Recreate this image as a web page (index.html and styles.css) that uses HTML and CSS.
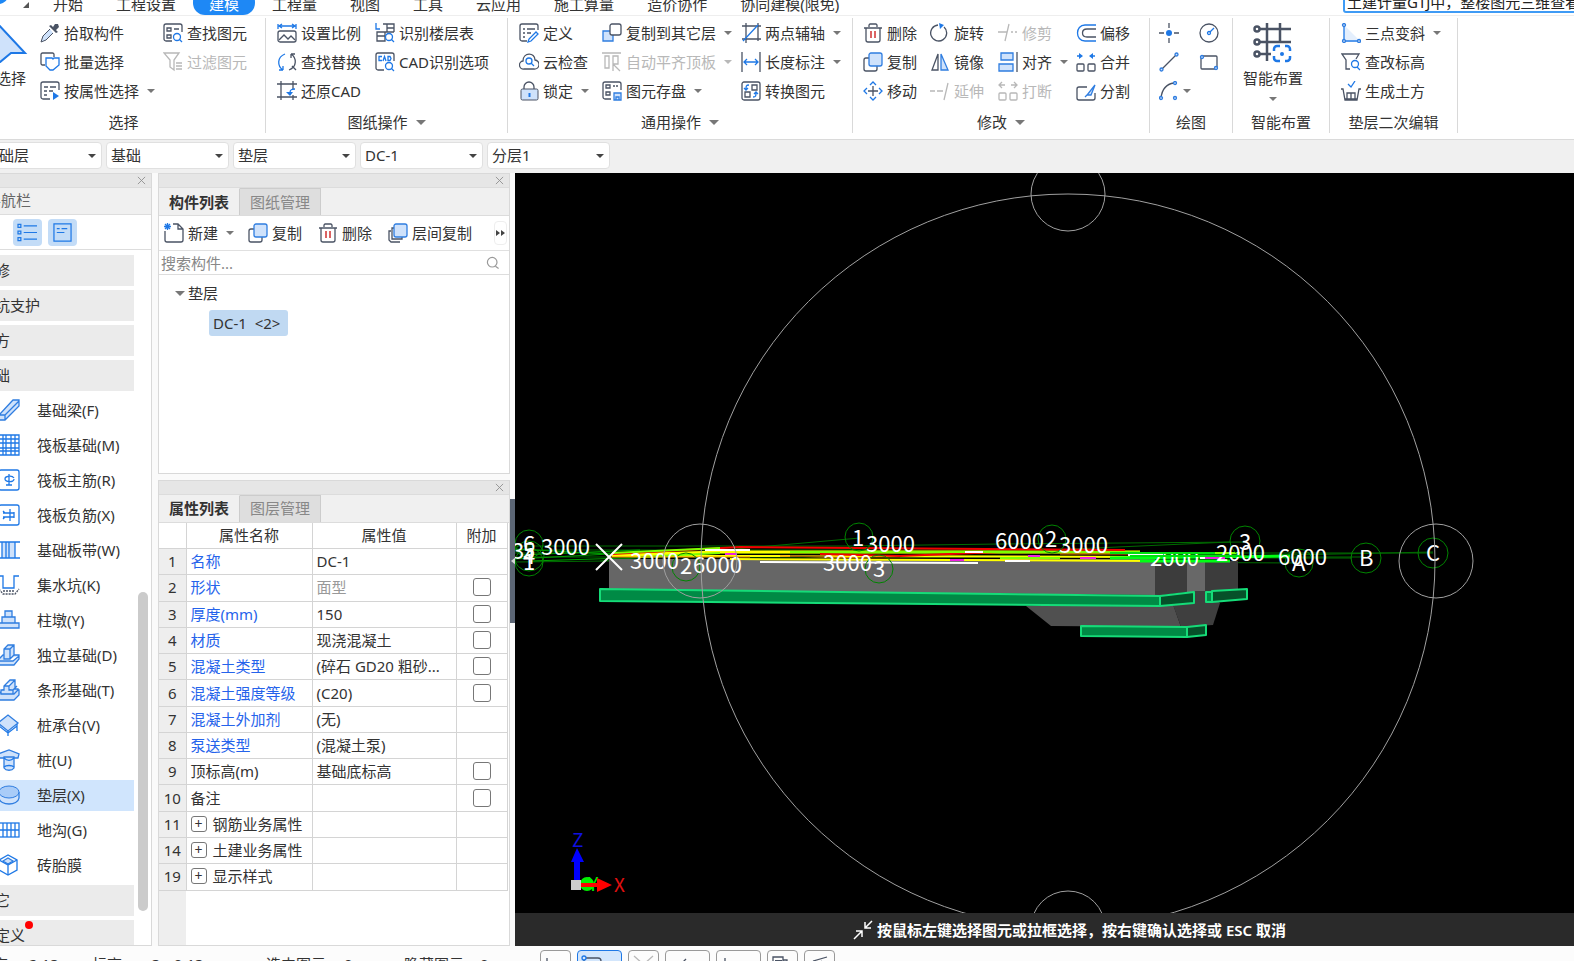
FILE: index.html
```html
<!DOCTYPE html>
<html lang="zh-CN">
<head>
<meta charset="utf-8">
<title>土建计量 - 建模</title>
<link rel="stylesheet" href="styles.css">
</head>
<body>
<svg class="defs" aria-hidden="true">
  <symbol id="i-pick" viewBox="0 0 20 20"><path d="M11 2l7 7-2 1-7-7zM13 4l2-3 3 0 1 3-3 3z" fill="#4a5364"/><path d="M10 6L3 13 1 19l5-2 7-7" fill="#cfe2fb" stroke="#4a5364"/></symbol>
  <symbol id="i-batch" viewBox="0 0 20 20"><path d="M5 13H2.500a1.500 1.500 0 0 1-1.500-1.500V2.500A1.500 1.500 0 0 1 2.500 1h10A1.500 1.500 0 0 1 14 2.500V5" class="g"/><path d="M6 6l6 0 1 1 1-1h5v7l-6 5h-3l-4-4z" class="b"/></symbol>
  <symbol id="i-prop" viewBox="0 0 20 20"><path d="M10 18H3a2 2 0 0 1-2-2V3a2 2 0 0 1 2-2h14a2 2 0 0 1 2 2v6M4 6h4M10 6h6M4 10h3M9 10h4M4 14h3" class="g"/><path d="M13 11l6 4-6 4z" fill="#1e78e6"/></symbol>
  <symbol id="i-find" viewBox="0 0 20 20"><path d="M9 18H3a2 2 0 0 1-2-2V3a2 2 0 0 1 2-2h14a2 2 0 0 1 2 2v6M4 5h4v3H4zM4 12h4v3H4zM11 6h5" class="g"/><circle cx="14" cy="14" r="3.500" class="b"/><path d="M16 16l3 3" class="b"/></symbol>
  <symbol id="i-filter" viewBox="0 0 20 20"><path d="M1 1h15l-5 7v10l-4-3V8zM13 11h6M13 14h6M13 17h6" class="d"/></symbol>
  <symbol id="i-scale" viewBox="0 0 20 20"><path d="M1 1v5M19 1v5M2 3h16M5 1L2 3l3 2M15 1l3 2-3 2" class="b"/><rect x="1" y="8" width="18" height="11" rx="2" class="g"/><path d="M2 17l5-5 4 4 3-3 4 4" class="g"/></symbol>
  <symbol id="i-replace" viewBox="0 0 20 20"><path d="M8 2C0 5 0 14 6 18M6 18H2M6 18v-4" class="b"/><path d="M12 18c8-3 8-12 2-16M14 2h4M14 2v4M15 14l4 4" class="g"/></symbol>
  <symbol id="i-restore" viewBox="0 0 20 20"><path d="M4 0v19M0 3h20M16 0v8M0 16h20M16 14v5" class="g"/><path d="M18 8c-4 0-5 1-5 4" class="b"/><path d="M9 11h7l-3 4z" fill="#1e78e6"/></symbol>
  <symbol id="i-floor" viewBox="0 0 20 20"><path d="M1 0v6h4" class="b"/><path d="M8 1h11v8M12 1v8H2v9h8V9M2 13h8M12 9h7M12 5h7" class="g"/><circle cx="14" cy="14" r="3.500" class="b"/><path d="M16 16l3 3" class="b"/></symbol>
  <symbol id="i-cad" viewBox="0 0 20 20"><path d="M9 18H3a2 2 0 0 1-2-2V3a2 2 0 0 1 2-2h14a2 2 0 0 1 2 2v6" class="g"/><path d="M7 4.500H4v4h3M8 9l1.500-4.500L11 9M13 4.500v4h2l1-2-1-2z" class="b"/><circle cx="14" cy="14" r="3.500" class="b"/><path d="M16 16l3 3" class="b"/></symbol>
  <symbol id="i-define" viewBox="0 0 20 20"><path d="M8 18H3a2 2 0 0 1-2-2V3a2 2 0 0 1 2-2h14a2 2 0 0 1 2 2v4M4 6h2M8 6h8M4 10h2M8 10h4M4 14h2" class="g"/><path d="M17 9l2 2-7 7-3 1 1-3z" class="b"/></symbol>
  <symbol id="i-cloud" viewBox="0 0 20 20"><path d="M5 17a4 4 0 0 1-1-8C4 0 16 0 16 8a4.500 4.500 0 0 1-1 9z" class="g"/><circle cx="10" cy="9" r="3" class="b"/><path d="M12 11l3 3" class="b"/></symbol>
  <symbol id="i-lock" viewBox="0 0 20 20"><path d="M5 9V6a5 5 0 0 1 10 0v3" class="g"/><rect x="2" y="8" width="17" height="11" rx="1.500" fill="#cfe2fb" stroke="#4a5364"/><path d="M10.500 12v4" stroke="#1e78e6" stroke-width="2"/></symbol>
  <symbol id="i-copyto" viewBox="0 0 20 20"><path d="M1 8h10v10H1z" class="f"/><rect x="8" y="1" width="11" height="11" rx="2" fill="#fff" stroke="#4a5364" stroke-width="1.300"/></symbol>
  <symbol id="i-top" viewBox="0 0 20 20"><path d="M0 1h19M3 4h4v12H3zM11 4h5v8h-5zM11 19v-7l7 7" class="d"/></symbol>
  <symbol id="i-save" viewBox="0 0 20 20"><path d="M9 18H3a2 2 0 0 1-2-2V3a2 2 0 0 1 2-2h14a2 2 0 0 1 2 2v6M4 4h4v3H4zM4 11h4v3H4zM11 5h2M14 5h2" class="g"/><path d="M12 12h7v7h-7zM14 19v-3h3v3" class="f"/></symbol>
  <symbol id="i-axis" viewBox="0 0 20 20"><path d="M5 0v20M17 0v18M1 3h19M1 16h19" class="g"/><path d="M2 18L17 2" class="b" stroke-width="2"/></symbol>
  <symbol id="i-length" viewBox="0 0 20 20"><path d="M1 0v20M19 0v20" class="g"/><path d="M3 10h14M6 7l-3 3 3 3M14 7l3 3-3 3" class="b"/></symbol>
  <symbol id="i-convert" viewBox="0 0 20 20"><rect x="1" y="1" width="18" height="18" rx="2" class="g"/><path d="M11 4h5v5h-5zM4 11h5v5H4z" class="g"/><path d="M8 4c-3 0-3 1-3 5M3 7l2 2 2-2M12 16c3 0 3-1 3-5M13 13l2-2 2 2" class="b"/></symbol>
  <symbol id="i-del" viewBox="0 0 20 20"><path d="M1 5h18M3 5v12a2 2 0 0 0 2 2h10a2 2 0 0 0 2-2V5M6 4V2l1-1h6l1 1v2" class="g"/><path d="M8 8v7M12 8v7" stroke="#d03030" stroke-width="1.500"/></symbol>
  <symbol id="i-rotate" viewBox="0 0 20 20"><path d="M14 4a8 8 0 1 1-6-2" class="g"/><path d="M9 0l5 2-4 4z" fill="#1e78e6"/></symbol>
  <symbol id="i-trim" viewBox="0 0 20 20"><path d="M0 9h9M13 9h2M17 9h2M11 1L7 18" class="d"/></symbol>
  <symbol id="i-offset" viewBox="0 0 20 20"><path d="M20 2H9C-1 2-1 18 9 18h11" class="b"/><path d="M20 6h-9c-6 0-6 8 0 8h9" class="g"/></symbol>
  <symbol id="i-copy" viewBox="0 0 20 20"><path d="M6 6H3a2 2 0 0 0-2 2v9a2 2 0 0 0 2 2h9a2 2 0 0 0 2-2v-3" class="g"/><rect x="6" y="1" width="13" height="13" rx="2" class="f"/></symbol>
  <symbol id="i-mirror" viewBox="0 0 20 20"><path d="M8 2v16H2z" class="g"/><path d="M11 2v16h7z" class="f"/></symbol>
  <symbol id="i-align" viewBox="0 0 20 20"><path d="M3 1h12v7H3zM1 12h14v7H1z" class="f"/><path d="M19 0v20" class="g"/></symbol>
  <symbol id="i-merge" viewBox="0 0 20 20"><path d="M1 4h4M19 4h-4" class="b"/><path d="M3 1l4 3-4 3zM17 1l-4 3 4 3z" fill="#1e78e6"/><rect x="1" y="12" width="7" height="7" rx="1" class="g"/><rect x="12" y="12" width="7" height="7" rx="1" class="g"/></symbol>
  <symbol id="i-move" viewBox="0 0 20 20"><path d="M10 5v10M5 10h10" class="g"/><path d="M7 4l3-3 3 3M7 16l3 3 3-3M4 7l-3 3 3 3M16 7l3 3-3 3" class="b"/></symbol>
  <symbol id="i-extend" viewBox="0 0 20 20"><path d="M0 10h5M7 10h6M18 2l-4 17" class="d"/></symbol>
  <symbol id="i-break" viewBox="0 0 20 20"><path d="M4 1L1 4l3 3M16 1l3 3-3 3M1 4h6M13 4h6" class="d"/><rect x="1" y="12" width="7" height="7" rx="1" class="d"/><rect x="12" y="12" width="7" height="7" rx="1" class="d"/></symbol>
  <symbol id="i-split" viewBox="0 0 20 20"><path d="M11 6H3a2 2 0 0 0-2 2v9a2 2 0 0 0 2 2h14a2 2 0 0 0 2-2v-5" class="g"/><path d="M19 4l-8 10h4zM11 14l-2 2" class="f"/></symbol>
  <symbol id="i-point" viewBox="0 0 20 20"><path d="M10 0v5M10 15v5M0 10h5M15 10h5" class="g"/><circle cx="10" cy="10" r="3" fill="#1e78e6"/></symbol>
  <symbol id="i-circle" viewBox="0 0 20 20"><circle cx="10" cy="10" r="9" class="g"/><circle cx="10" cy="10" r="1.500" class="b"/><path d="M11 9l4-4" class="b"/></symbol>
  <symbol id="i-line" viewBox="0 0 20 20"><path d="M2 18L18 2" class="g"/><circle cx="2.500" cy="17.500" r="1.500" class="f"/><circle cx="17.500" cy="2.500" r="1.500" class="f"/></symbol>
  <symbol id="i-rect" viewBox="0 0 20 20"><rect x="2" y="4" width="16" height="13" rx="1" class="g"/><circle cx="3" cy="5" r="1.500" class="f"/><circle cx="17" cy="16" r="1.500" class="f"/></symbol>
  <symbol id="i-arc" viewBox="0 0 20 20"><path d="M2 17C3 8 8 3 15 2" class="g"/><circle cx="2" cy="17" r="1.500" class="f"/><circle cx="16" cy="2" r="1.500" class="f"/><circle cx="16" cy="17" r="1.500" class="f"/></symbol>
  <symbol id="i-slope" viewBox="0 0 20 20"><path d="M3 2v15h15z" fill="#e4effd"/><path d="M3 2v16h16" class="b"/><circle cx="3" cy="2" r="1.500" class="f"/><circle cx="3" cy="18" r="1.500" class="f"/><circle cx="18" cy="18" r="1.500" class="f"/></symbol>
  <symbol id="i-level" viewBox="0 0 20 20"><path d="M9 17H5V8L1 2h17l-3 5" class="g"/><circle cx="14" cy="12" r="3.500" class="b"/><path d="M16 15l3 3" class="b"/></symbol>
  <symbol id="i-earth" viewBox="0 0 20 20"><path d="M0 8h2l2 11h12l2-11h2M6 18v-6h8v6M10 12v6M4 18h12" class="g"/><path d="M7 3l3 3 4-6" class="b"/></symbol>
  <symbol id="i-new" viewBox="0 0 20 20"><path d="M1 8v9a2 2 0 0 0 2 2h14a2 2 0 0 0 2-2V6l-5-5H9M14 1v5h5" class="g"/><path d="M1 1l5 5M6 1L1 6M3.500 0v7M0 3.500h7" class="b"/></symbol>
  <symbol id="i-layers" viewBox="0 0 20 20"><path d="M3 8H1v9l2 2h9M6 5H4v11h10v-2" class="g"/><rect x="6" y="1" width="13" height="13" rx="2" class="f"/></symbol>
  <symbol id="i-search" viewBox="0 0 20 20"><circle cx="9" cy="9" r="6" fill="none" stroke="#999" stroke-width="1.500"/><path d="M13 14l4 3" stroke="#999" stroke-width="1.500"/></symbol>
  <symbol id="i-x" viewBox="0 0 10 10"><path d="M1 1l8 8M9 1L1 9" stroke="#909090" fill="none"/></symbol>
  <symbol id="n-beam" viewBox="0 0 22 22"><path d="M1 16L15 1h6v6L7 21H1zM1 16h6v5M7 16L21 2" class="f"/></symbol>
  <symbol id="n-raft" viewBox="0 0 22 22"><path d="M1 1h20v20H1zM1 5h20M1 9h20M1 14h20M1 17h20M5 1v20M8 1v20M13 1v20M17 1v20" class="b"/></symbol>
  <symbol id="n-main" viewBox="0 0 22 22"><rect x="1" y="1" width="20" height="20" rx="2" class="b"/><path d="M11 5v11M16 9c-2-3-9-2-9 1s9 4 9 0M8 16h6" class="b"/></symbol>
  <symbol id="n-neg" viewBox="0 0 22 22"><rect x="1" y="1" width="20" height="20" rx="2" class="b"/><path d="M5 9h11M5 13h11M12 5v12M5 7l2 2M5 15l2-2M16 8v6" class="b"/></symbol>
  <symbol id="n-band" viewBox="0 0 22 22"><path d="M4 3h13v16H4z" fill="#cfe2fb"/><path d="M0 3h22M0 19h22M4 3v16M17 3v16M11 3v16M8 3v16" class="b"/></symbol>
  <symbol id="n-pit" viewBox="0 0 22 22"><path d="M0 2h5v12h11V2h5" class="b"/><path d="M1 15l4 5h12l4-5M5 17h12" class="g" stroke-dasharray="2 1"/></symbol>
  <symbol id="n-pier" viewBox="0 0 22 22"><path d="M7 2h7v6H7zM4 8h13v6H4zM0 14h21v5H0z" class="f"/></symbol>
  <symbol id="n-iso" viewBox="0 0 22 22"><path d="M0 16l5-5h16v4l-5 6H0zM0 17h15l6-5" class="f"/><path d="M6 15V5l4-4h6v10l-4 4zM6 5h6v10M12 5l4-4" class="f"/></symbol>
  <symbol id="n-strip" viewBox="0 0 22 22"><path d="M0 16l5-5h16v5l-5 5H0z" class="f"/><path d="M3 15v-4h3V7l6-6h5v9h3v1l-4 4zM6 7h5l6-6M11 7v4h4v4M15 11l4-4" class="f"/></symbol>
  <symbol id="n-cap" viewBox="0 0 22 22"><path d="M0 9l10-8 10 8-10 8z" class="f"/><path d="M1 10v7M19 10v7M10 17v5M1 12l9 7 9-7" class="b"/></symbol>
  <symbol id="n-pile" viewBox="0 0 22 22"><path d="M0 5l11-4 10 4-1 4H1z" class="f"/><path d="M6 8h10v11c-2 3-8 3-10 0z" class="f"/><path d="M6 9c3 3 7 3 10 0M6 18c2-2 8-2 10 0" class="b"/></symbol>
  <symbol id="n-pad" viewBox="0 0 22 22"><path d="M1 8v6c1 8 19 8 20 0V8" class="f"/><ellipse cx="11" cy="8" rx="10" ry="6" fill="#a9ccf8" stroke="#2f7de0"/></symbol>
  <symbol id="n-ditch" viewBox="0 0 22 22"><rect x="0" y="4" width="21" height="14" class="b"/><path d="M5 4v14M9 4v14M13 4v14M17 4v14M0 11h21" class="b"/></symbol>
  <symbol id="n-brick" viewBox="0 0 22 22"><path d="M1 6l9-5 9 5v10l-9 5-9-5z" class="b"/><path d="M5 7l5-3 5 3-5 3z" class="f"/><path d="M1 6l9 5 9-5M10 11v10" class="b"/></symbol>
</svg>

<div class="app">
  <nav class="menu" aria-label="主菜单">
    <span class="logo"></span><span class="corner"></span>
    <a href="#">开始</a><a href="#">工程设置</a><a href="#" class="on">建模</a><a href="#">工程量</a><a href="#">视图</a><a href="#">工具</a><a href="#">云应用</a><a href="#">施工算量</a><a href="#">造价协作</a><a href="#">协同建模(限免)</a>
    <input class="ask" type="text" aria-label="搜索" value="土建计量GTJ中，整楼图元三维查看">
  </nav>

  <header class="ribbon">
    <section class="group g1">
      <div class="tools">
        <button class="big"><svg viewBox="0 0 40 40"><path d="M6 0L34 30H20L8 40z" fill="#cfe2fb" stroke="#1e78e6" stroke-width="2"/></svg>选择</button>
        <button><svg><use href="#i-pick"/></svg>拾取构件</button>
        <button><svg><use href="#i-batch"/></svg>批量选择</button>
        <button><svg><use href="#i-prop"/></svg>按属性选择<i class="caret"></i></button>
        <button><svg><use href="#i-find"/></svg>查找图元</button>
        <button disabled><svg><use href="#i-filter"/></svg>过滤图元</button>
      </div>
      <div class="label">选择</div>
    </section>
    <section class="group g2">
      <div class="tools">
        <button><svg><use href="#i-scale"/></svg>设置比例</button>
        <button><svg><use href="#i-replace"/></svg>查找替换</button>
        <button><svg><use href="#i-restore"/></svg>还原CAD</button>
        <button><svg><use href="#i-floor"/></svg>识别楼层表</button>
        <button><svg><use href="#i-cad"/></svg>CAD识别选项</button>
      </div>
      <div class="label">图纸操作<i class="caret wide"></i></div>
    </section>
    <section class="group g3">
      <div class="tools">
        <button><svg><use href="#i-define"/></svg>定义</button>
        <button><svg><use href="#i-cloud"/></svg>云检查</button>
        <button><svg><use href="#i-lock"/></svg>锁定<i class="caret"></i></button>
        <button><svg><use href="#i-copyto"/></svg>复制到其它层<i class="caret"></i></button>
        <button disabled><svg><use href="#i-top"/></svg>自动平齐顶板<i class="caret"></i></button>
        <button><svg><use href="#i-save"/></svg>图元存盘<i class="caret"></i></button>
        <button><svg><use href="#i-axis"/></svg>两点辅轴<i class="caret"></i></button>
        <button><svg><use href="#i-length"/></svg>长度标注<i class="caret"></i></button>
        <button><svg><use href="#i-convert"/></svg>转换图元</button>
      </div>
      <div class="label">通用操作<i class="caret wide"></i></div>
    </section>
    <section class="group g4">
      <div class="tools">
        <button><svg><use href="#i-del"/></svg>删除</button>
        <button><svg><use href="#i-copy"/></svg>复制</button>
        <button><svg><use href="#i-move"/></svg>移动</button>
        <button><svg><use href="#i-rotate"/></svg>旋转</button>
        <button><svg><use href="#i-mirror"/></svg>镜像</button>
        <button disabled><svg><use href="#i-extend"/></svg>延伸</button>
        <button disabled><svg><use href="#i-trim"/></svg>修剪</button>
        <button><svg><use href="#i-align"/></svg>对齐<i class="caret"></i></button>
        <button disabled><svg><use href="#i-break"/></svg>打断</button>
        <button><svg><use href="#i-offset"/></svg>偏移</button>
        <button><svg><use href="#i-merge"/></svg>合并</button>
        <button><svg><use href="#i-split"/></svg>分割</button>
      </div>
      <div class="label">修改<i class="caret wide"></i></div>
    </section>
    <section class="group g5">
      <div class="tools">
        <button aria-label="点"><svg><use href="#i-point"/></svg></button>
        <button aria-label="直线"><svg><use href="#i-line"/></svg></button>
        <button aria-label="弧"><svg><use href="#i-arc"/></svg><i class="caret"></i></button>
        <button aria-label="圆"><svg><use href="#i-circle"/></svg></button>
        <button aria-label="矩形"><svg><use href="#i-rect"/></svg></button>
      </div>
      <div class="label">绘图</div>
    </section>
    <section class="group g6">
      <div class="tools">
        <button class="big"><svg viewBox="0 0 40 40"><g fill="none" stroke="#4a5364" stroke-width="2.500"><path d="M6 6h32M6 19h32M6 31h12M14 0v38M27 0v18"/><g fill="#fff"><circle cx="4" cy="6" r="2.500"/><circle cx="4" cy="19" r="2.500"/><circle cx="4" cy="31" r="2.500"/></g></g><path d="M27 23h-3a3 3 0 0 0-3 3v2M32 23h2a3 3 0 0 1 3 3v2M37 33v2a3 3 0 0 1-3 3h-2M27 38h-3a3 3 0 0 1-3-3v-2" fill="none" stroke="#1e78e6" stroke-width="2.500"/><circle cx="29" cy="31" r="2" fill="#1e78e6"/></svg>智能布置<i class="caret"></i></button>
      </div>
      <div class="label">智能布置</div>
    </section>
    <section class="group g7">
      <div class="tools">
        <button><svg><use href="#i-slope"/></svg>三点变斜<i class="caret"></i></button>
        <button><svg><use href="#i-level"/></svg>查改标高</button>
        <button><svg><use href="#i-earth"/></svg>生成土方</button>
      </div>
      <div class="label">垫层二次编辑</div>
    </section>
  </header>

  <div class="context">
    <label class="combo"><select aria-label="楼层"><option>基础层</option></select></label>
    <label class="combo"><select aria-label="构件大类"><option>基础</option></select></label>
    <label class="combo"><select aria-label="构件类型"><option>垫层</option></select></label>
    <label class="combo"><select aria-label="构件"><option>DC-1</option></select></label>
    <label class="combo"><select aria-label="分层"><option>分层1</option></select></label>
  </div>

  <main class="main">
    <aside class="panel nav">
      <div class="strip"><button aria-label="关闭"><svg><use href="#i-x"/></svg></button></div>
      <div class="nav-title">导航栏</div>
      <div class="nav-mode">
        <button aria-label="列表"><svg viewBox="0 0 20 20"><path d="M6 3h14M6 10h14M6 17h14M0 1.500h3v3H0zM0 8.500h3v3H0zM0 15.500h3v3H0z" class="b"/></svg></button>
        <button aria-label="分组"><svg viewBox="0 0 20 20"><path d="M1 1h18v18H1zM4 6h3M9 6h6M4 10h8" class="b"/></svg></button>
      </div>
      <div class="nav-body">
        <div class="nav-list">
          <button class="sec">装修</button>
          <button class="sec">基坑支护</button>
          <button class="sec">土方</button>
          <button class="sec">基础</button>
          <button><svg><use href="#n-beam"/></svg>基础梁(F)</button>
          <button><svg><use href="#n-raft"/></svg>筏板基础(M)</button>
          <button><svg><use href="#n-main"/></svg>筏板主筋(R)</button>
          <button><svg><use href="#n-neg"/></svg>筏板负筋(X)</button>
          <button><svg><use href="#n-band"/></svg>基础板带(W)</button>
          <button><svg><use href="#n-pit"/></svg>集水坑(K)</button>
          <button><svg><use href="#n-pier"/></svg>柱墩(Y)</button>
          <button><svg><use href="#n-iso"/></svg>独立基础(D)</button>
          <button><svg><use href="#n-strip"/></svg>条形基础(T)</button>
          <button><svg><use href="#n-cap"/></svg>桩承台(V)</button>
          <button><svg><use href="#n-pile"/></svg>桩(U)</button>
          <button class="cur"><svg><use href="#n-pad"/></svg>垫层(X)</button>
          <button><svg><use href="#n-ditch"/></svg>地沟(G)</button>
          <button><svg><use href="#n-brick"/></svg>砖胎膜</button>
          <button class="sec">其它</button>
          <button class="sec"><span class="dot">自定义</span></button>
        </div>
        <div class="track"><div class="thumb"></div></div>
      </div>
    </aside>

    <div class="docks">
      <section class="panel">
        <div class="strip"><button aria-label="关闭"><svg><use href="#i-x"/></svg></button></div>
        <div class="tabs"><button class="on">构件列表</button><button>图纸管理</button></div>
        <div class="bar">
          <button><svg><use href="#i-new"/></svg>新建<i class="caret"></i></button>
          <button><svg><use href="#i-copy"/></svg>复制</button>
          <button><svg><use href="#i-del"/></svg>删除</button>
          <button><svg><use href="#i-layers"/></svg>层间复制</button>
          <button class="more" aria-label="更多"><svg viewBox="0 0 10 6"><path d="M0 0l4 3-4 3zM5 0l4 3-4 3z" fill="#444"/></svg></button>
        </div>
        <label class="search"><input type="text" aria-label="搜索构件" placeholder="搜索构件..."><svg><use href="#i-search"/></svg></label>
        <div class="tree">
          <div class="node"><i class="caret wide"></i>垫层</div>
          <button class="leaf">DC-1&nbsp; &lt;2&gt;</button>
        </div>
      </section>
      <section class="panel props">
        <div class="strip"><button aria-label="关闭"><svg><use href="#i-x"/></svg></button></div>
        <div class="tabs"><button class="on">属性列表</button><button>图层管理</button></div>
        <div class="sheet">
          <table>
            <colgroup><col class="c1"><col class="c2"><col class="c3"><col class="c4"></colgroup>
            <thead><tr><td></td><th>属性名称</th><th>属性值</th><th>附加</th></tr></thead>
            <tbody>
              <tr><th>1</th><td class="k">名称</td><td>DC-1</td><td></td></tr>
              <tr><th>2</th><td class="k">形状</td><td class="mute">面型</td><td><input type="checkbox" aria-label="附加 形状"></td></tr>
              <tr><th>3</th><td class="k">厚度(mm)</td><td>150</td><td><input type="checkbox" aria-label="附加 厚度"></td></tr>
              <tr><th>4</th><td class="k">材质</td><td>现浇混凝土</td><td><input type="checkbox" aria-label="附加 材质"></td></tr>
              <tr><th>5</th><td class="k">混凝土类型</td><td>(碎石 GD20 粗砂...</td><td><input type="checkbox" aria-label="附加 混凝土类型"></td></tr>
              <tr><th>6</th><td class="k">混凝土强度等级</td><td>(C20)</td><td><input type="checkbox" aria-label="附加 混凝土强度等级"></td></tr>
              <tr><th>7</th><td class="k">混凝土外加剂</td><td>(无)</td><td></td></tr>
              <tr><th>8</th><td class="k">泵送类型</td><td>(混凝土泵)</td><td></td></tr>
              <tr><th>9</th><td>顶标高(m)</td><td>基础底标高</td><td><input type="checkbox" aria-label="附加 顶标高"></td></tr>
              <tr><th>10</th><td>备注</td><td></td><td><input type="checkbox" aria-label="附加 备注"></td></tr>
              <tr><th>11</th><td><button class="plus">+</button>钢筋业务属性</td><td></td><td></td></tr>
              <tr><th>14</th><td><button class="plus">+</button>土建业务属性</td><td></td><td></td></tr>
              <tr><th>19</th><td><button class="plus">+</button>显示样式</td><td></td><td></td></tr>
            </tbody>
          </table>
          <div class="gutter"></div>
        </div>
      </section>
    </div>

    <div class="split"><button aria-label="收起面板"><svg viewBox="0 0 5 8"><path d="M5 0v8L0 4z" fill="#d8d8d8"/></svg></button></div>

    <section class="view">
      <svg class="scene" viewBox="515 172 1059 774" preserveAspectRatio="xMinYMin slice" aria-label="三维视图">
        <g fill="none" stroke="#006c00">
          <path d="M515 545L850 545 1000 543 1245 541M515 549H1050L1230 541M515 552H1433M515 556H1366M515 561L700 559 1299 562M600 560L860 537M686 567L760 559M879 567L1060 560M1238 555L1433 551M1240 557H1352"/>
          <path d="M515 548L610 553M515 558L610 553M520 554L640 549M530 560L690 555" stroke="#00a000"/>
        </g>
        <path d="M609 558H1155V594L609 589z" fill="#666"/>
        <path d="M1155 560h32v31l-32 4zM1205 560h33v29l-33 3z" fill="#3c3c3c"/>
        <path d="M1187 560h18v31h-18z" fill="#686868"/>
        <path d="M1026 605L1051 625 1181 626 1173 603z" fill="#505050"/>
        <path d="M1173 604L1181 626 1213 624 1220 602 1205 590H1195z" fill="#3f3f3f"/>
        <g stroke="#15dc78" stroke-width="2" stroke-linejoin="round">
          <path d="M600 588L1160 595V605L600 600z" fill="#008a45"/>
          <path d="M1160 595L1194 591V602L1160 605z" fill="#065029"/>
          <path d="M1206 591h6v10h-6z" fill="#008a45"/>
          <path d="M1212 590L1247 588V598L1212 601z" fill="#065029"/>
          <path d="M1081 625L1187 626V636L1081 635z" fill="#008a45"/>
          <path d="M1187 626L1206 624V634L1187 636z" fill="#065029"/>
        </g>
        <g fill="none">
          <path d="M612 554L720 551H1155" stroke="#ff0" stroke-width="3"/>
          <path d="M612 555L800 555 1155 556M730 558L1155 560" stroke="#ff0" stroke-width="2"/>
          <path d="M612 553L740 546 1125 549M820 553L900 555 1000 551" stroke="#f00000" stroke-width="2"/>
          <path d="M612 552L720 547M640 556L720 552M790 551h350M1000 557h60M1130 552h110" stroke="#7dff00" stroke-width="2"/>
          <path d="M1110 557L1290 555M1140 560h90M1150 555h90" stroke="#00ff14" stroke-width="3"/>
          <path d="M610 556H750M780 555L870 557M1060 553h80" stroke="#f08000"/>
          <path d="M705 549h45M760 561L978 562M965 551h18M1128 554h35M1005 560h25M1200 557h12" stroke="#fff" stroke-width="2"/>
          <path d="M725 553h12M950 559h14M1028 555h12M1080 557h16M1205 557h20" stroke="#f020e0" stroke-width="2"/>
          <path d="M790 555h36M870 557h30" stroke="#502000"/>
        </g>
        <g fill="none" stroke="#008400">
          <circle cx="529" cy="543" r="14"/><circle cx="529" cy="555" r="15"/><circle cx="529" cy="561" r="14"/>
          <circle cx="686" cy="566" r="14"/><circle cx="859" cy="536" r="14"/><circle cx="879" cy="568" r="14"/>
          <circle cx="1052" cy="538" r="14"/><circle cx="1245" cy="540" r="15"/><circle cx="1299" cy="562" r="14"/>
          <circle cx="1366" cy="557" r="15"/><circle cx="1433" cy="552" r="15"/>
        </g>
        <g class="dims">
          <text x="512" y="558">3</text><text x="523" y="551">6</text><text x="523" y="558">5</text><text x="523" y="563">4</text><text x="523" y="569">1</text>
          <text x="541" y="554">3000</text><text x="630" y="568">3000</text><text x="680" y="573">2</text><text x="693" y="572">6000</text>
          <text x="852" y="545">1</text><text x="866" y="551">3000</text><text x="823" y="570">3000</text><text x="873" y="576">3</text>
          <text x="995" y="548">6000</text><text x="1045" y="546">2</text><text x="1059" y="552">3000</text>
          <text x="1150" y="565">2000</text><text x="1216" y="560">2000</text><text x="1239" y="549">3</text>
          <text x="1278" y="564">6000</text><text x="1292" y="570">A</text><text x="1359" y="565">B</text><text x="1426" y="560">C</text>
        </g>
        <path d="M1140 548h62v4h-62z" fill="#000"/>
        <path d="M1110 552h105M1130 555h110" stroke="#00e010" stroke-width="2"/>
        <path d="M596 543l26 26M622 543l-26 26" stroke="#fff" stroke-width="2"/>
        <g fill="none" stroke="#a0a0a0">
          <circle cx="1068" cy="560" r="367"/><circle cx="1068" cy="193" r="37"/><circle cx="1068" cy="927" r="37"/>
          <circle cx="700" cy="560" r="37"/><circle cx="1436" cy="560" r="37"/>
        </g>
        <path d="M574 880V861h-3l6-14 7 14h-4v19z" fill="#00f"/>
        <text x="572" y="846" class="ax" fill="#1010e0">Z</text>
        <circle cx="587" cy="883" r="7" fill="#00f000"/><text x="588" y="890" class="ax" fill="#00f000">Y</text>
        <path d="M580 882h17v-5l15 7-15 7v-5h-17z" fill="#f00"/>
        <text x="614" y="891" class="ax" fill="#e01010">X</text>
        <path d="M571 879h10v10h-10z" fill="#ccc"/>
      </svg>
      <div class="hint"><svg viewBox="0 0 20 20"><path d="M19 1l-7 7M12 2v6h6M1 19l8-8M3 11h6v6" fill="none" stroke="#fff" stroke-width="1.500"/></svg>按鼠标左键选择图元或拉框选择，按右键确认选择或 ESC 取消</div>
    </section>
  </main>

  <footer class="status">
    <div class="facts"><span>层高:</span><span>2.13</span><span>标高:</span><span>-3~-0.13</span><span>选中图元:</span><span>0</span><span>隐藏图元:</span><span>0</span></div>
    <div class="snaps">
      <button aria-label="正交"><svg><path d="M6 7v14h14" class="g"/></svg></button>
      <button class="wide on" aria-label="捕捉"><svg><path d="M8 7h12a3 3 0 0 1 3 3v10M6 9v10" class="g"/><circle cx="6" cy="7" r="2" class="b"/></svg></button>
      <button aria-label="交点"><svg><path d="M5 5l18 16M24 5L6 21" class="d"/></svg></button>
      <button class="wide" aria-label="垂点"><svg><path d="M20 8L8 20" class="g"/></svg></button>
      <button class="wide" aria-label="中点"><svg><path d="M8 7v14h14" class="g"/></svg></button>
      <button aria-label="顶点"><svg><path d="M5 6h10v12H5zM15 9h4v9" class="g"/><path d="M7 9h7v6H7z" fill="#4a5364"/></svg></button>
      <button aria-label="坐标"><svg><path d="M8 10L22 6M9 18l8-8" class="g"/></svg></button>
    </div>
  </footer>
</div>
</body>
</html>
```
FILE: styles.css
```css
* { box-sizing: border-box; }
body { margin: 0; background: #fff; color: #333; font: 15px/20px "Noto Sans", "Noto Sans CJK SC", sans-serif; }
button, input, select { font: inherit; color: inherit; border: 0; background: none; padding: 0; margin: 0; }
button { display: flex; align-items: center; white-space: nowrap; }
.defs { position: absolute; width: 0; height: 0; }
.g { fill: none; stroke: #4a5364; stroke-width: 1.3; }
.b { fill: none; stroke: #1e78e6; stroke-width: 1.3; }
.f { fill: #cfe2fb; stroke: #2f7de0; stroke-width: 1.3; }
.d { fill: none; stroke: #b8b8b8; stroke-width: 1.3; }
.app { display: flex; flex-direction: column; height: 100vh; overflow: hidden; }
.caret { flex: none; border: 4px solid transparent; border-top-color: #777; border-bottom: 0; margin-left: 8px; }
.caret.wide { border-width: 5px; border-bottom: 0; margin-left: 8px; }

.menu { display: flex; align-items: flex-end; gap: 1px; flex: none; height: 16px; overflow: hidden; border-bottom: 1px solid #eee; }
.menu a { flex: none; height: 25px; padding: 0 16px; line-height: 28px; color: #333; text-decoration: none; border-radius: 12px; }
.menu a.on { background: #1e88f5; color: #fff; }
.logo { width: 9px; height: 16px; margin-left: -1px; background: #1e88f5; border-radius: 0 0 9px 0; align-self: flex-start; margin-top: -12px; }
.corner { border-left: 6px solid transparent; border-bottom: 6px solid #555; margin: 0 7px 7px 14px; }
.ask { width: 240px; height: 26px; margin: 0 -9px 2px auto; padding: 2px 2px 0; border: 2px solid #3f9bf5; border-radius: 3px; color: #222; }

.ribbon { display: flex; flex: none; padding: 2px 0 6px; border-bottom: 1px solid #dadada; overflow: hidden; }
.group { flex: none; padding-bottom: 1px; border-right: 1px solid #d9d9d9; }
.tools { display: grid; grid-auto-flow: column; grid-template-rows: repeat(3, 29px); padding-left: 11px; }
.tools button { gap: 4px; }
.tools svg { flex: none; width: 20px; height: 20px; }
.tools .caret { margin-left: 4px; }
.tools button:disabled { color: #b8b8b8; }
.tools button:disabled .caret { border-top-color: #b8b8b8; }
.tools .big { grid-row: 1 / 4; flex-direction: column; gap: 5px; padding-top: 5px; }
.tools .big svg { width: 40px; height: 40px; }
.tools .big .caret { margin: 4px 0 0; }
.label { display: flex; justify-content: center; align-items: center; padding-top: 7px; }
.g1 { margin-left: -18px; }
.g1 .tools { grid-template-columns: 58px 123px 102px; padding-left: 0; }
.g2 .tools { grid-template-columns: 98px 132px; }
.g3 .tools { grid-template-columns: 83px 139px 111px; }
.g4 .tools { grid-template-columns: 67px 68px 78px 73px; padding-left: 10px; }
.g5 .tools { grid-template-columns: 40px 33px; padding-left: 9px; }
.g5 .caret { margin-left: 0; }
.g6 .tools { grid-template-columns: 80px; padding: 0 16px 0 0; justify-content: center; }
.g7 .tools { grid-template-columns: 116px; }

.context { display: flex; flex: none; gap: 4px; height: 33px; padding: 2px 0 4px; background: #f0f0f0; margin-left: -21px; }
.combo { position: relative; width: 123px; }
.combo select { width: 100%; height: 27px; padding: 0 4px 2px; appearance: none; background: #fff; border: 1px solid #e0e0e0; border-radius: 4px; }
.combo::after { content: ""; position: absolute; right: 6px; top: 12px; border: 4px solid transparent; border-top-color: #444; border-bottom: 0; pointer-events: none; }

.main { display: grid; grid-template-columns: 152px 358px 5px minmax(0, 1fr); flex: 1; min-height: 0; background: #fafafa; }
.panel { display: flex; flex-direction: column; min-height: 0; border: 1px solid #d9d9d9; background: #fff; overflow: hidden; }
.strip { display: flex; flex: none; justify-content: flex-end; height: 14px; padding-right: 5px; background: #e6e6e6; border-bottom: 1px solid #dcdcdc; }
.strip svg { width: 9px; height: 9px; }
.nav { border-left: 0; }
.nav-title { flex: none; height: 27px; line-height: 25px; margin-left: -14px; background: #f0f0f0; color: #666; border-bottom: 1px solid #ddd; }
.nav-mode { display: flex; flex: none; gap: 6px; height: 35px; padding: 4px 0 3px 13px; border-bottom: 1px solid #ddd; }
.nav-mode button { justify-content: center; width: 29px; height: 27px; border-radius: 4px; background: #c3dcf7; }
.nav-mode svg { width: 19px; height: 19px; overflow: visible; }
.nav-body { display: flex; flex: 1; min-height: 0; padding-right: 3px; }
.nav-list { display: flex; flex-direction: column; flex: none; gap: 4px; width: 162px; margin-left: -28px; padding-top: 5px; overflow: hidden; }
.nav-list button { flex: none; gap: 17px; height: 31px; padding: 0 0 2px 26px; }
.nav-list .sec { padding-left: 8px; background: #ebebeb; }
.nav-list .cur { background: #d0e5fd; }
.nav-list svg { flex: none; width: 22px; height: 22px; }
.dot { position: relative; }
.dot::after { content: ""; position: absolute; left: 45px; top: -4px; width: 8px; height: 8px; border-radius: 50%; background: #f00; }
.track { display: flex; flex-direction: column; flex: 1; padding: 342px 0 34px 4px; }
.thumb { flex: 1; width: 10px; border-radius: 5px; background: #cbcbcb; }

.docks { display: grid; grid-template-rows: 301fr 467fr; gap: 6px; min-height: 0; padding-left: 6px; }
.tabs { display: flex; flex: none; height: 28px; background: #f0f0f0; border-bottom: 1px solid #dcdcdc; }
.tabs button { padding: 0 10px 1px; background: #dedede; color: #888; border: 1px solid #ccc; border-width: 1px 1px 0 0; }
.tabs .on { background: #f0f0f0; color: #333; font-weight: 600; border-top-color: transparent; }
.bar { display: flex; flex: none; align-items: center; height: 35px; padding-left: 5px; border-bottom: 1px solid #e0e0e0; }
.bar button { gap: 4px; margin-right: 16px; }
.bar svg { width: 20px; height: 20px; }
.bar .caret { margin: 0 -2px 0 4px; }
.bar .more { justify-content: center; width: 13px; height: 24px; margin: 0 2px 0 auto; border: 1px solid #eee; border-radius: 4px; }
.bar .more svg { width: 10px; height: 6px; flex: none; }
.search { display: flex; align-items: center; flex: none; height: 24px; padding: 0 8px 0 2px; border-bottom: 1px solid #ddd; }
.search input { flex: 1; min-width: 0; outline: 0; }
.search input::placeholder { color: #888; }
.search svg { width: 16px; height: 16px; }
.tree { padding: 8px 0 0 8px; }
.node { display: flex; align-items: center; gap: 3px; }
.leaf { height: 26px; margin: 7px 0 0 42px; padding: 0 8px 1px 4px; border-radius: 3px; background: #c0d9f2; }

.sheet { display: flex; flex-direction: column; flex: 1; min-height: 0; }
table { flex: none; width: 348px; height: 368px; table-layout: fixed; border-collapse: collapse; }
.c1 { width: 27px; } .c2 { width: 126px; } .c3 { width: 144px; } .c4 { width: 51px; }
td, th { height: 26px; padding: 0 0 1px 4px; border: 1px solid #d4d4d4; border-left: 0; border-top: 0; font-weight: 400; text-align: left; white-space: nowrap; }
thead th, tbody th { padding: 0 0 1px; text-align: center; }
tbody th { background: #eee; }
.k { color: #2563eb; }
.mute { color: #999; }
td input { display: block; appearance: none; width: 18px; height: 18px; margin: 0 0 0 12px; border: 1px solid #777; border-radius: 3px; background: #fff; }
.plus { display: inline-flex; justify-content: center; width: 16px; height: 16px; margin-right: 6px; border: 1px solid #777; border-radius: 3px; font-size: 14px; line-height: 14px; vertical-align: 1px; }
.gutter { flex: 1; width: 27px; background: #eee; }

.split { display: flex; flex-direction: column; justify-content: center; }
.split button { justify-content: flex-end; width: 5px; height: 124px; margin-top: 3px; background: #5c6675; }
.split svg { width: 4px; height: 8px; }
.view { position: relative; min-width: 0; background: #000; overflow: hidden; }
.scene { display: block; width: 100%; height: 100%; }
.dims { fill: #fff; font: 22px "Noto Sans CJK SC", sans-serif; }
.ax { font: 19px "Noto Sans CJK SC", sans-serif; }
.hint { position: absolute; left: 0; right: 0; bottom: 0; display: flex; align-items: center; justify-content: center; gap: 4px; height: 33px; padding-left: 50px; background: #2a2a2a; color: #fff; font-weight: 600; }
.hint svg { width: 20px; height: 20px; }

.status { display: flex; flex: none; height: 15px; overflow: hidden; background: #fcfcfc; }
.facts { display: grid; grid-template-columns: 51px 63px 55px 119px 78px 60px 76px 60px; flex: none; width: 562px; height: 30px; padding-top: 8px; margin-left: -22px; }
.snaps { display: flex; gap: 6px; height: 30px; padding-top: 4px; }
.snaps button { flex: none; width: 31px; height: 26px; border: 1px solid #999; border-radius: 4px; }
.snaps .wide { width: 45px; }
.snaps .on { background: #d3e6fc; border-color: #1e78e6; }
.snaps svg { width: 29px; height: 24px; }
```
